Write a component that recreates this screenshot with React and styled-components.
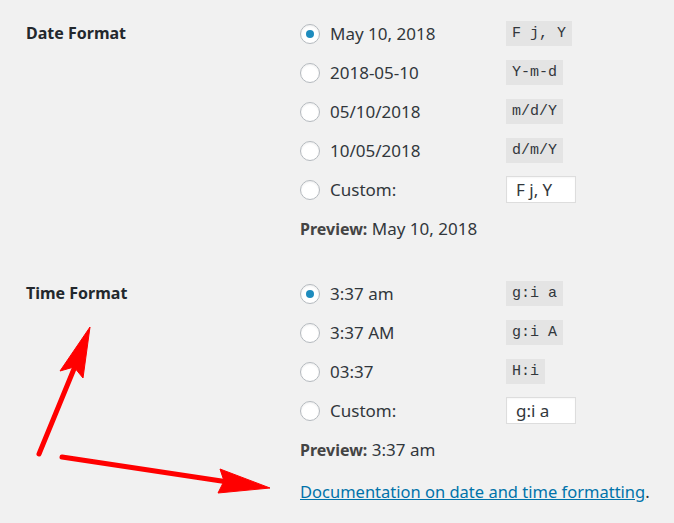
import React from 'react';
import styled, { createGlobalStyle } from 'styled-components';

const GlobalStyle = createGlobalStyle`
  html, body {
    margin: 0;
    padding: 0;
    background: #f1f1f1;
  }
  body {
    font-family: "Noto Sans", "Open Sans", sans-serif;
    color: #444;
  }
`;

const dateOptions = [
  { label: 'May 10, 2018', code: 'F j, Y', checked: true },
  { label: '2018-05-10', code: 'Y-m-d' },
  { label: '05/10/2018', code: 'm/d/Y' },
  { label: '10/05/2018', code: 'd/m/Y' },
];

const timeOptions = [
  { label: '3:37 am', code: 'g:i a', checked: true },
  { label: '3:37 AM', code: 'g:i A' },
  { label: '03:37', code: 'H:i' },
];

const Page = styled.div`
  position: relative;
  width: 674px;
  height: 523px;
  overflow: hidden;
  box-sizing: border-box;
  padding: 14px 0 0 26px;
  display: flex;
  flex-direction: column;
  gap: 26px;
`;

const Section = styled.div`
  display: grid;
  grid-template-columns: 274px 1fr;
`;

const Label = styled.div`
  height: 39px;
  line-height: 39px;
  font-size: 16px;
  font-weight: 700;
  color: #23282d;
`;

const Fieldset = styled.div`
  display: flex;
  flex-direction: column;
`;

const Row = styled.label`
  display: flex;
  align-items: center;
  height: 39px;
  font-size: 17px;
  color: #32373c;
`;

const Radio = styled.span`
  position: relative;
  width: 20px;
  height: 20px;
  box-sizing: border-box;
  border-radius: 50%;
  border: 1px solid #b4b9be;
  background: #fff;
  box-shadow: inset 0 1px 2px rgba(0, 0, 0, 0.07);
  margin-right: 10px;
  flex-shrink: 0;

  &::after {
    content: '';
    display: ${(p) => (p.checked ? 'block' : 'none')};
    position: absolute;
    left: 5px;
    top: 5px;
    width: 8px;
    height: 8px;
    border-radius: 50%;
    background: #1e8cbe;
  }
`;

const OptionText = styled.span`
  width: 176px;
`;

const Code = styled.code`
  font-family: "Liberation Mono", "DejaVu Sans Mono", monospace;
  font-size: 15px;
  line-height: 25px;
  padding: 0 6px;
  background: #e4e4e4;
  color: #32373c;
`;

const Input = styled.span`
  width: 70px;
  height: 27px;
  box-sizing: border-box;
  border: 1px solid #ddd;
  background: #fff;
  padding: 0 9px;
  line-height: 25px;
  font-size: 17px;
  color: #32373c;
  box-shadow: inset 0 1px 2px rgba(0, 0, 0, 0.04);
`;

const Preview = styled.div`
  height: 39px;
  line-height: 39px;
  font-size: 17px;
  color: #32373c;

  strong {
    font-weight: 700;
    font-size: 16px;
    color: #444;
  }
`;

const LinkLine = styled.div`
  margin: -23px 0 0 274px;
  line-height: 39px;
  font-size: 16.5px;
  color: #32373c;

  a {
    color: #0073aa;
    text-decoration: underline;
  }
`;

const Overlay = styled.svg`
  position: absolute;
  left: 0;
  top: 0;
  pointer-events: none;
`;

const Options = ({ items, custom, preview }) => (
  <Fieldset>
    {items.map((o) => (
      <Row key={o.code}>
        <Radio checked={o.checked} />
        <OptionText>{o.label}</OptionText>
        <Code>{o.code}</Code>
      </Row>
    ))}
    <Row>
      <Radio />
      <OptionText>Custom:</OptionText>
      <Input>{custom}</Input>
    </Row>
    <Preview>
      <strong>Preview:</strong> {preview}
    </Preview>
  </Fieldset>
);

const Arrows = () => (
  <Overlay width="674" height="523" viewBox="0 0 674 523">
    <g fill="#ff0000" stroke="#ff0000">
      <line x1="39" y1="454" x2="76" y2="364" strokeWidth="5" strokeLinecap="round" />
      <polygon points="90,327 83,378 74,367 60,371" strokeWidth="1" />
      <line x1="62" y1="457" x2="228" y2="482" strokeWidth="5" strokeLinecap="round" />
      <polygon points="270,488 218,493 224,481 220,469" strokeWidth="1" />
    </g>
  </Overlay>
);

const App = () => (
  <>
    <GlobalStyle />
    <Page>
      <Section>
        <Label>Date Format</Label>
        <Options items={dateOptions} custom="F j, Y" preview="May 10, 2018" />
      </Section>
      <Section>
        <Label>Time Format</Label>
        <Options items={timeOptions} custom="g:i a" preview="3:37 am" />
      </Section>
      <LinkLine>
        <a href="#">Documentation on date and time formatting</a>.
      </LinkLine>
      <Arrows />
    </Page>
  </>
);

export default App;
